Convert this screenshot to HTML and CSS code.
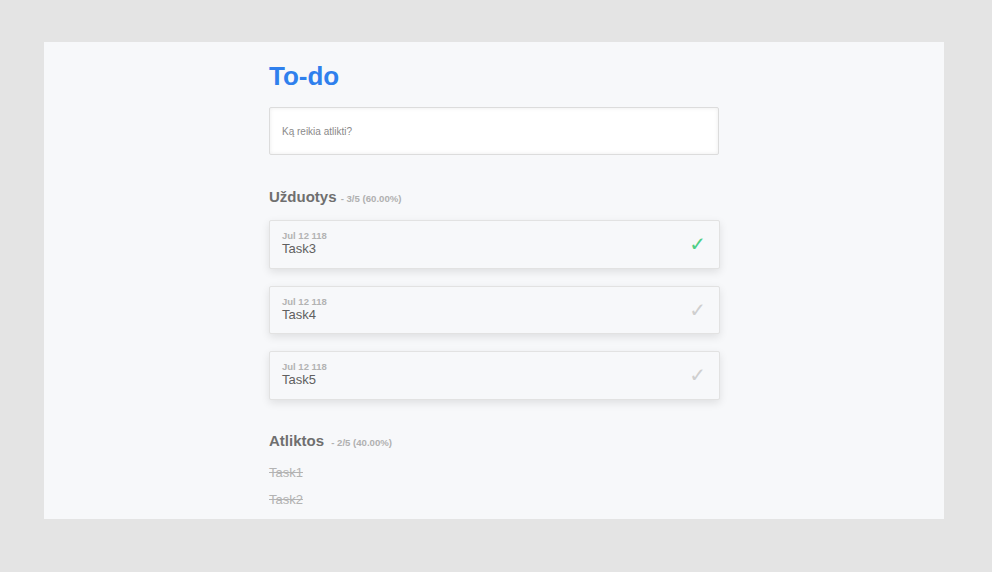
FILE: index.html
```html
<!DOCTYPE html>
<html lang="lt">
<head>
<meta charset="utf-8">
<title>To-do</title>
<link rel="stylesheet" href="styles.css">
</head>
<body>
<div class="panel">
  <main class="app">
    <h1 class="title">To-do</h1>
    <div class="input-box"><input class="new-task" type="text" placeholder="Ką reikia atlikti?"></div>

    <h2 class="section-title">Užduotys <span class="stats">- 3/5 (60.00%)</span></h2>
    <ul class="tasks">
      <li class="card">
        <div class="card-text"><div class="date">Jul 12 118</div><div class="name">Task3</div></div>
        <span class="check done">✓</span>
      </li>
      <li class="card">
        <div class="card-text"><div class="date">Jul 12 118</div><div class="name">Task4</div></div>
        <span class="check">✓</span>
      </li>
      <li class="card">
        <div class="card-text"><div class="date">Jul 12 118</div><div class="name">Task5</div></div>
        <span class="check">✓</span>
      </li>
    </ul>

    <h2 class="section-title done-title">Atliktos <span class="stats wide">- 2/5 (40.00%)</span></h2>
    <ul class="completed">
      <li>Task1</li>
      <li>Task2</li>
    </ul>
  </main>
</div>
</body>
</html>
```
FILE: styles.css
```css
* { box-sizing: border-box; }
html, body { margin: 0; padding: 0; }
body {
  background: #e4e4e4;
  padding: 42px 48px 0 44px;
  font-family: "Liberation Sans", Arial, sans-serif;
}
.panel {
  width: 900px;
  height: 477px;
  background: #f7f8fa;
  overflow: hidden;
}
.app {
  width: 450px;
  margin: 0 auto;
  padding-top: 18px;
}
.title {
  margin: 0;
  font-size: 26px;
  line-height: 32px;
  color: #2f80ed;
  font-weight: bold;
}
.input-box {
  margin-top: 15px;
  height: 48px;
  background: #fff;
  border: 1px solid #dcdcdc;
  border-radius: 2px;
  box-shadow: inset 0 0 4px rgba(0,0,0,0.08);
}
.new-task {
  width: 100%;
  height: 100%;
  border: 0;
  background: transparent;
  padding: 0 12px;
  font-family: inherit;
  font-size: 10px;
  color: #555;
  outline: none;
}
.new-task::placeholder { color: #8a8a8a; }
.section-title {
  margin: 32px 0 0;
  font-size: 15px;
  line-height: 20px;
  color: #6f6f6f;
  font-weight: bold;
}
.stats {
  font-size: 9.6px;
  color: #b0b0b0;
  font-weight: bold;
}
.stats.wide { margin-left: 3px; }
.tasks {
  list-style: none;
  margin: 11px 0 0;
  padding: 0;
  display: flex;
  flex-direction: column;
  gap: 17px;
  width: 451px;
}
.card {
  height: 48.5px;
  display: flex;
  align-items: center;
  justify-content: space-between;
  padding: 0 13px 2px 12px;
  background: #f7f8fa;
  border: 1px solid #e2e2e2;
  border-radius: 2px;
  box-shadow: 0 3px 8px rgba(0,0,0,0.1);
}
.date {
  font-size: 9.5px;
  font-weight: bold;
  color: #b3b3b3;
  line-height: 11px;
}
.name {
  font-size: 13px;
  color: #606060;
  line-height: 15px;
}
.check {
  font-family: "DejaVu Sans", sans-serif;
  font-size: 20px;
  line-height: 20px;
  margin-top: 2px;
  color: #cfcfcf;
}
.check.done { color: #4fcf86; }
.done-title { margin-top: 31px; }
.completed {
  list-style: none;
  margin: 6px 0 0;
  padding: 0;
}
.completed li {
  font-size: 13px;
  line-height: 27px;
  color: #b3b3b3;
  text-decoration: line-through;
}
```
